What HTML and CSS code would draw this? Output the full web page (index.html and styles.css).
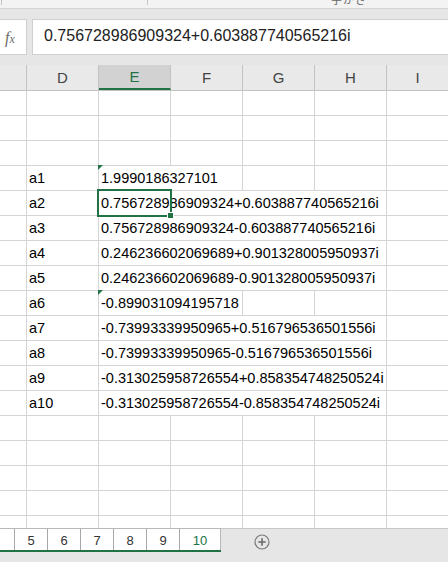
FILE: index.html
```html
<!DOCTYPE html>
<html lang="ja">
<head>
    <meta charset="UTF-8">
    <title>Book1 - Excel</title>
    <link rel="stylesheet" href="styles.css">
</head>
<body>
    <div class="ribbon-edge">
        <div class="group group-first"></div>
        <div class="group group-second"><span class="ribbon-label">字かさ</span></div>
    </div>

    <div class="formula-bar">
        <div class="fx-box"><span class="fx-f">f</span><span class="fx-x">x</span></div>
        <div class="formula-input">0.756728986909324+0.603887740565216i</div>
    </div>

    <div class="sheet">
        <div class="col-header">
            <div class="hcell col-c"></div>
            <div class="hcell">D</div>
            <div class="hcell active">E</div>
            <div class="hcell">F</div>
            <div class="hcell">G</div>
            <div class="hcell">H</div>
            <div class="hcell col-i">I</div>
        </div>

        <div class="row"><div class="cell col-c"></div><div class="cell"></div><div class="cell"></div><div class="cell"></div><div class="cell"></div><div class="cell"></div><div class="cell col-i"></div></div>
        <div class="row"><div class="cell col-c"></div><div class="cell"></div><div class="cell"></div><div class="cell"></div><div class="cell"></div><div class="cell"></div><div class="cell col-i"></div></div>
        <div class="row"><div class="cell col-c"></div><div class="cell"></div><div class="cell"></div><div class="cell"></div><div class="cell"></div><div class="cell"></div><div class="cell col-i"></div></div>

        <div class="row"><div class="cell col-c"></div><div class="cell">a1</div><div class="cell span2 flag">1.9990186327101</div><div class="cell"></div><div class="cell"></div><div class="cell col-i"></div></div>
        <div class="row"><div class="cell col-c"></div><div class="cell">a2</div><div class="cell span4">0.756728986909324+0.603887740565216i</div><div class="cell col-i"></div></div>
        <div class="row"><div class="cell col-c"></div><div class="cell">a3</div><div class="cell span4">0.756728986909324-0.603887740565216i</div><div class="cell col-i"></div></div>
        <div class="row"><div class="cell col-c"></div><div class="cell">a4</div><div class="cell span4">0.246236602069689+0.901328005950937i</div><div class="cell col-i"></div></div>
        <div class="row"><div class="cell col-c"></div><div class="cell">a5</div><div class="cell span4">0.246236602069689-0.901328005950937i</div><div class="cell col-i"></div></div>
        <div class="row"><div class="cell col-c"></div><div class="cell">a6</div><div class="cell span2 flag">-0.899031094195718</div><div class="cell"></div><div class="cell"></div><div class="cell col-i"></div></div>
        <div class="row"><div class="cell col-c"></div><div class="cell">a7</div><div class="cell span4">-0.73993339950965+0.516796536501556i</div><div class="cell col-i"></div></div>
        <div class="row"><div class="cell col-c"></div><div class="cell">a8</div><div class="cell span4">-0.73993339950965-0.516796536501556i</div><div class="cell col-i"></div></div>
        <div class="row"><div class="cell col-c"></div><div class="cell">a9</div><div class="cell span4">-0.313025958726554+0.858354748250524i</div><div class="cell col-i"></div></div>
        <div class="row"><div class="cell col-c"></div><div class="cell">a10</div><div class="cell span4">-0.313025958726554-0.858354748250524i</div><div class="cell col-i"></div></div>

        <div class="row"><div class="cell col-c"></div><div class="cell"></div><div class="cell"></div><div class="cell"></div><div class="cell"></div><div class="cell"></div><div class="cell col-i"></div></div>
        <div class="row"><div class="cell col-c"></div><div class="cell"></div><div class="cell"></div><div class="cell"></div><div class="cell"></div><div class="cell"></div><div class="cell col-i"></div></div>
        <div class="row"><div class="cell col-c"></div><div class="cell"></div><div class="cell"></div><div class="cell"></div><div class="cell"></div><div class="cell"></div><div class="cell col-i"></div></div>
        <div class="row"><div class="cell col-c"></div><div class="cell"></div><div class="cell"></div><div class="cell"></div><div class="cell"></div><div class="cell"></div><div class="cell col-i"></div></div>
        <div class="row"><div class="cell col-c"></div><div class="cell"></div><div class="cell"></div><div class="cell"></div><div class="cell"></div><div class="cell"></div><div class="cell col-i"></div></div>

        <!-- active cell E5 -->
        <div class="selection"><div class="fill-handle"></div></div>
    </div>

    <div class="tab-bar">
        <div class="tabs">
            <div class="tab tab-cut"></div>
            <div class="tab">5</div>
            <div class="tab">6</div>
            <div class="tab">7</div>
            <div class="tab">8</div>
            <div class="tab">9</div>
            <div class="tab tab-active">10</div>
        </div>
        <div class="tab-rest">
            <svg class="add-sheet" width="16" height="16" viewBox="0 0 16 16">
                <circle cx="8" cy="8" r="7" fill="none" stroke="#7a7a7a" stroke-width="1.2"/>
                <path d="M8 4.3v7.4M4.3 8h7.4" stroke="#6a6a6a" stroke-width="1.6"/>
            </svg>
        </div>
    </div>
    <div class="status-bar"></div>
</body>
</html>
```

FILE: styles.css
```css
body {
    margin: 0;
    width: 448px;
    height: 562px;
    overflow: hidden;
    background: #e6e6e6;
    font-family: "Liberation Sans", Arial, sans-serif;
}

/* bottom edge of the ribbon */
.ribbon-edge {
    display: flex;
    height: 8px;
    background: #f3f3f3;
    border-bottom: 1px solid #d4d4d4;
    overflow: hidden;
}
.group {
    height: 5px;
    border-left: 1px solid #c6c6c6;
}
.group-first {
    margin-left: 1px;
    width: 145px;
}
.group-second {
    flex: 1;
    overflow: visible;
}
.ribbon-label {
    display: block;
    margin: -6px 0 0 183px;
    font-family: "Noto Sans CJK JP", sans-serif;
    font-size: 11px;
    line-height: 11px;
    color: #666;
    letter-spacing: 1px;
}

/* formula bar */
.formula-bar {
    display: flex;
    gap: 5px;
    padding: 10px 0;
}
.fx-box {
    width: 27px;
    height: 36px;
    box-sizing: border-box;
    background: white;
    border: 1px solid #d0d0d0;
    border-left: none;
    padding: 9px 0 0 5px;
    color: #6a6a6a;
    font-family: "Liberation Serif", serif;
    font-style: italic;
}
.fx-f {
    font-size: 16px;
}
.fx-x {
    font-size: 12px;
}
.formula-input {
    flex: 1;
    height: 36px;
    box-sizing: border-box;
    background: white;
    border: 1px solid #d0d0d0;
    border-right: none;
    padding: 0 0 2px 11px;
    font-size: 16px;
    line-height: 32px;
    color: #222;
    white-space: nowrap;
}

/* grid */
.sheet {
    position: relative;
    height: 463px;
    overflow: hidden;
    background: white;
}
.col-header {
    display: flex;
    height: 26px;
    background: #e9e9e9;
    border-bottom: 1px solid #c3c3c3;
    box-sizing: border-box;
}
.hcell {
    width: 72px;
    box-sizing: border-box;
    border-right: 1px solid #c3c3c3;
    text-align: center;
    font-size: 15px;
    line-height: 25px;
    color: #444;
}
.hcell.active {
    background: #d2d2d2;
    color: #217346;
    border-bottom: 2px solid #217346;
    line-height: 24px;
}
.row {
    display: flex;
    height: 25px;
    box-sizing: border-box;
    border-bottom: 1px solid #d4d4d4;
}
.cell {
    position: relative;
    width: 72px;
    flex-shrink: 0;
    box-sizing: border-box;
    border-right: 1px solid #d4d4d4;
    padding-left: 2px;
    font-size: 14.5px;
    line-height: 24px;
    color: #000;
    white-space: nowrap;
}
.col-c {
    width: 27px;
}
.col-i {
    flex: 1;
    border-right: none;
}
.span2 {
    width: 144px;
}
.span4 {
    width: 288px;
}
.flag::before {
    content: "";
    position: absolute;
    top: -1px;
    left: -1px;
    border-top: 5px solid #217346;
    border-right: 5px solid transparent;
}

.selection {
    position: absolute;
    left: 97px;
    top: 124px;
    width: 75px;
    height: 28px;
    box-sizing: border-box;
    border: 2px solid #217346;
}
.fill-handle {
    position: absolute;
    right: -4px;
    bottom: -4px;
    width: 5px;
    height: 5px;
    background: #217346;
    border: 1px solid white;
}

/* sheet tabs */
.tab-bar {
    display: flex;
    height: 24px;
}
.tabs {
    display: flex;
    background: white;
    border-top: 1px solid #b8b8b8;
    border-bottom: 2px solid #217346;
}
.tab {
    width: 33px;
    box-sizing: border-box;
    border-right: 1px solid #a8a8a8;
    text-align: center;
    font-size: 13px;
    line-height: 19px;
    padding-top: 2px;
    color: #333;
}
.tab-cut {
    width: 15px;
}
.tab-active {
    width: 41px;
    color: #217346;
    border-right: 1px solid #b8b8b8;
}
.tab-rest {
    flex: 1;
    display: flex;
    align-items: center;
    padding-left: 33px;
    background: #e6e6e6;
    border-top: 1px solid #c6c6c6;
}
.add-sheet {
    margin-top: 3px;
}
.status-bar {
    height: 10px;
    background: #e6e6e6;
}
```
